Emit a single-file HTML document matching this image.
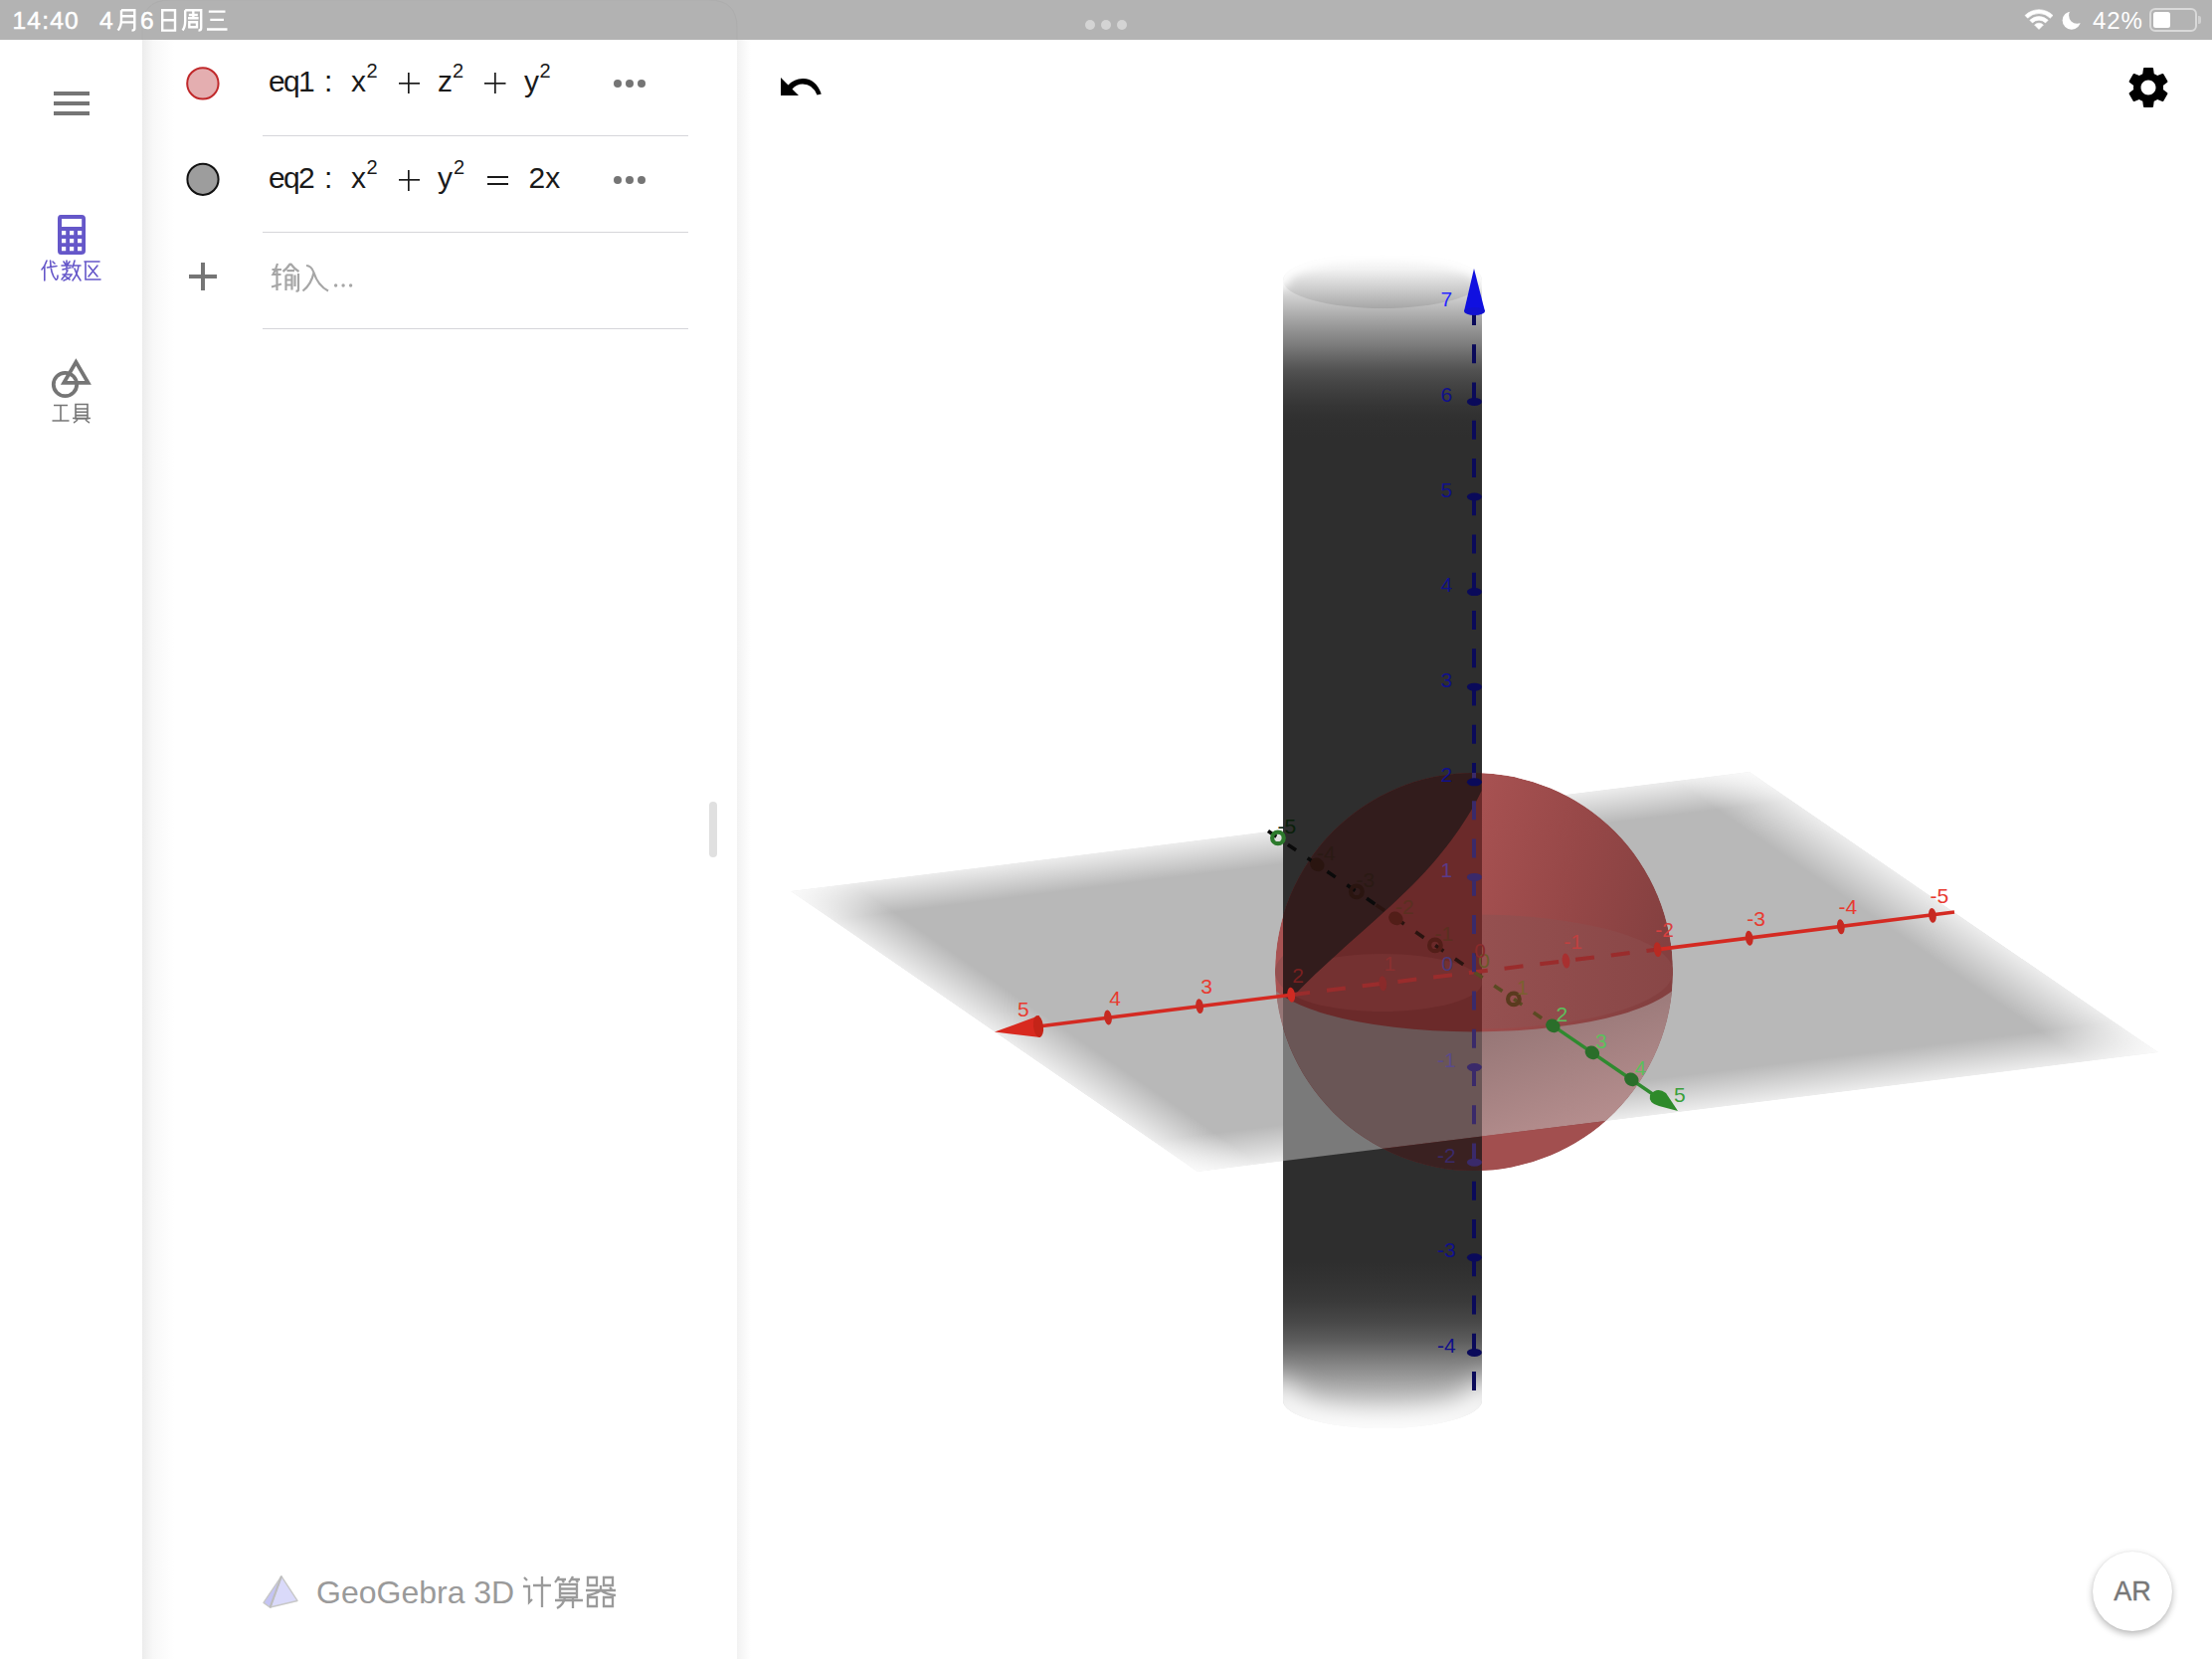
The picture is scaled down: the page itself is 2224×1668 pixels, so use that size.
<!DOCTYPE html>
<html><head><meta charset="utf-8">
<style>
html,body{margin:0;padding:0;width:2224px;height:1668px;overflow:hidden;background:#fff;font-family:"Liberation Sans",sans-serif;}
.abs{position:absolute;}
#status{position:absolute;left:0;top:0;width:2224px;height:40px;background:#b3b3b3;color:#fff;}
#side{position:absolute;left:0;top:40px;width:143px;height:1628px;background:#fff;}
#panel{position:absolute;left:143px;top:40px;width:598px;height:1628px;background:#fff;}
#panelshadowL{position:absolute;left:143px;top:40px;width:32px;height:1628px;background:linear-gradient(to right,#ececec,#f8f8f8 35%,rgba(255,255,255,0));}
#gvshadow{position:absolute;left:741px;top:40px;width:14px;height:1628px;background:linear-gradient(to right,#f2f2f2,rgba(255,255,255,0));}
.eq{position:absolute;font-size:30px;color:#1a1a1a;line-height:30px;white-space:pre;}
.sup{position:absolute;font-size:20px;color:#1a1a1a;line-height:20px;}
.div{position:absolute;left:264px;width:428px;height:1.5px;background:#d6d6da;}
.plus{position:absolute;width:21.5px;height:21px;background:linear-gradient(#1a1a1a,#1a1a1a) center/21.5px 1.7px no-repeat,linear-gradient(#1a1a1a,#1a1a1a) center/1.7px 21px no-repeat;}
.dot3{position:absolute;width:8px;height:8px;border-radius:50%;background:#757575;}
</style></head><body>

<svg class="abs" style="left:0;top:0" width="2224" height="1668" viewBox="0 0 2224 1668" id="scene"><defs>
<filter id="ubl14" filterUnits="userSpaceOnUse" x="0" y="0" width="2224" height="1668"><feGaussianBlur stdDeviation="14"/></filter>
<filter id="ubl5" filterUnits="userSpaceOnUse" x="0" y="0" width="2224" height="1668"><feGaussianBlur stdDeviation="5"/></filter>
<clipPath id="cpPlane"><polygon points="795.0,896.0 1759.0,776.0 2170.0,1058.0 1204.0,1178.0"/></clipPath>
<filter id="blur18" x="-20%" y="-20%" width="140%" height="140%"><feGaussianBlur stdDeviation="18"/></filter>
<filter id="blur14" x="-20%" y="-20%" width="140%" height="140%"><feGaussianBlur stdDeviation="14"/></filter>
<filter id="blur12" x="-20%" y="-20%" width="140%" height="140%"><feGaussianBlur stdDeviation="12"/></filter>
<filter id="blur16" x="-20%" y="-20%" width="140%" height="140%"><feGaussianBlur stdDeviation="16"/></filter>
<filter id="blur6" x="-20%" y="-20%" width="140%" height="140%"><feGaussianBlur stdDeviation="6"/></filter>
<filter id="blur3"><feGaussianBlur stdDeviation="3"/></filter>
<clipPath id="cpCyl"><rect x="1290" y="200" width="200" height="1300"/></clipPath>
<clipPath id="cpSph"><circle cx="1482" cy="977" r="200"/></clipPath>
<clipPath id="cpSphOut"><rect x="1000" y="700" width="290" height="600"/><rect x="1490" y="700" width="400" height="600"/></clipPath>
<clipPath id="cpEll"><ellipse cx="1482" cy="977" rx="200" ry="57.5"/></clipPath>
<clipPath id="cpBelowEq"><path d="M1272,977 A200,57.5 0 0,0 1692,977 L1800,1104.0 L1200,1178.5 Z"/></clipPath>
<clipPath id="cpBelowPlane"><path d="M1200,1178.5 L1800,1104.0 V1300 H1200 Z"/></clipPath>
<linearGradient id="gCyl" x1="0" y1="0" x2="0" y2="1" gradientUnits="objectBoundingBox">
<stop offset="0.0000" stop-color="#eeeeee"/>
<stop offset="0.0260" stop-color="#b5b5b5"/>
<stop offset="0.0364" stop-color="#a0a0a0"/>
<stop offset="0.0468" stop-color="#8c8c8c"/>
<stop offset="0.0572" stop-color="#7a7a7a"/>
<stop offset="0.0676" stop-color="#656565"/>
<stop offset="0.0780" stop-color="#525252"/>
<stop offset="0.0884" stop-color="#464646"/>
<stop offset="0.0988" stop-color="#3d3d3d"/>
<stop offset="0.1092" stop-color="#353535"/>
<stop offset="0.1205" stop-color="#303030"/>
<stop offset="0.1369" stop-color="#2e2e2e"/>
<stop offset="0.8553" stop-color="#2e2e2e"/>
<stop offset="0.8726" stop-color="#333333"/>
<stop offset="0.8899" stop-color="#3a3a3a"/>
<stop offset="0.9073" stop-color="#484848"/>
<stop offset="0.9246" stop-color="#5e5e5e"/>
<stop offset="0.9419" stop-color="#808080"/>
<stop offset="0.9593" stop-color="#a2a2a2"/>
<stop offset="0.9757" stop-color="#c0c0c0"/>
<stop offset="1.0000" stop-color="#f0f0f0"/>
</linearGradient>
<linearGradient id="gCap" x1="0" y1="0" x2="0" y2="1"><stop offset="0" stop-color="#ffffff"/><stop offset="0.3" stop-color="#f2f2f2"/><stop offset="0.65" stop-color="#cdcdcd"/><stop offset="1" stop-color="#a6a6a6"/></linearGradient>
<linearGradient id="gSph" x1="1470" y1="840" x2="1690" y2="900" gradientUnits="userSpaceOnUse"><stop offset="0" stop-color="#a85252"/><stop offset="0.5" stop-color="#974848"/><stop offset="1" stop-color="#844040"/></linearGradient>
<linearGradient id="gR3" x1="1490" y1="1035" x2="1530" y2="1150" gradientUnits="userSpaceOnUse"><stop offset="0" stop-color="#967676"/><stop offset="1" stop-color="#b48d8d"/></linearGradient>
<linearGradient id="gR2" x1="1490" y1="0" x2="1690" y2="0" gradientUnits="userSpaceOnUse"><stop offset="0" stop-color="#955050"/><stop offset="1" stop-color="#884646"/></linearGradient>
</defs>
<g clip-path="url(#cpPlane)">
<polygon points="795.0,896.0 1759.0,776.0 2170.0,1058.0 1204.0,1178.0" fill="#b8b8b8"/>
<linearGradient id="pe0" gradientUnits="userSpaceOnUse" x1="1277.0" y1="836.0" x2="1281.2" y2="869.7"><stop offset="0" stop-color="#fff" stop-opacity="0.74"/><stop offset="1" stop-color="#fff" stop-opacity="0"/></linearGradient>
<polygon points="601.6,915.0 1951.2,747.0 1956.2,787.7 606.6,955.7" fill="url(#pe0)"/>
<linearGradient id="pe1" gradientUnits="userSpaceOnUse" x1="1964.5" y1="917.0" x2="1936.2" y2="958.2"><stop offset="0" stop-color="#fff" stop-opacity="0.74"/><stop offset="1" stop-color="#fff" stop-opacity="0"/></linearGradient>
<polygon points="1679.6,715.5 2255.0,1110.3 2222.8,1157.3 1647.4,762.5" fill="url(#pe1)"/>
<linearGradient id="pe2" gradientUnits="userSpaceOnUse" x1="1687.0" y1="1118.0" x2="1682.6" y2="1082.3"><stop offset="0" stop-color="#fff" stop-opacity="0.74"/><stop offset="1" stop-color="#fff" stop-opacity="0"/></linearGradient>
<polygon points="2363.8,1039.0 1011.4,1207.0 1006.1,1164.3 2358.5,996.3" fill="url(#pe2)"/>
<linearGradient id="pe3" gradientUnits="userSpaceOnUse" x1="999.5" y1="1037.0" x2="1023.3" y2="1002.4"><stop offset="0" stop-color="#fff" stop-opacity="0.74"/><stop offset="1" stop-color="#fff" stop-opacity="0"/></linearGradient>
<polygon points="1283.0,1238.5 710.4,843.7 738.2,803.4 1310.8,1198.2" fill="url(#pe3)"/>
</g>
<path d="M1290,282 V1408 A100,28 0 0,0 1490,1408 V282 Z" fill="url(#gCyl)"/>
<ellipse cx="1390.0" cy="282" rx="100" ry="28" fill="url(#gCap)"/>
<clipPath id="cpCylFull"><path d="M1290,282 A100,28 0 0,1 1490,282 V1408 A100,28 0 0,1 1290,1408 Z"/></clipPath>
<g clip-path="url(#cpCylFull)">
<path d="M1270,1398 L1290,1408 A100,28 0 0,0 1490,1408 L1510,1398" fill="none" stroke="#ffffff" stroke-width="30" filter="url(#ubl14)"/>
<path d="M1270,292 L1290,282 A100,28 0 0,1 1490,282 L1510,292" fill="none" stroke="#ffffff" stroke-width="12" filter="url(#ubl5)"/>
</g>
<path d="M1290,988 A100,29 0 0,0 1490,988 V1142.5 L1290,1167.3 Z" fill="#7a7a7a"/>
<g clip-path="url(#cpSphOut)"><g clip-path="url(#cpSph)">
<circle cx="1482" cy="977" r="200" fill="url(#gSph)"/>
<ellipse cx="1482" cy="977" rx="200" ry="57.5" fill="url(#gR2)"/>
<rect x="1200" y="900" width="600" height="300" fill="url(#gR3)" clip-path="url(#cpBelowEq)"/>
<rect x="1200" y="1000" width="600" height="300" fill="#a24f4f" clip-path="url(#cpBelowPlane)"/>
</g></g>
<g clip-path="url(#cpCyl)"><g clip-path="url(#cpSph)">
<rect x="1290" y="770" width="200" height="420" fill="#6b2a2a"/>
<ellipse cx="1390" cy="988" rx="100" ry="29" fill="#743131"/>
<path d="M1301.5,1000.4 C1335,965 1385,925 1420,890 S1478,820 1489.6,795 L1490,760 L1280,760 L1280,1000 Z" fill="#321c1c"/>
<rect x="1200" y="900" width="600" height="300" fill="#6a5656" clip-path="url(#cpBelowEq)"/>
<rect x="1200" y="1000" width="600" height="300" fill="#3a2121" clip-path="url(#cpBelowPlane)"/>
</g></g>
<line x1="1040.0" y1="1032.5" x2="1298.2" y2="1000.2" stroke="#d42a22" stroke-width="3.6" stroke-linecap="butt"/>
<line x1="1666.6" y1="954.6" x2="1965.0" y2="917.0" stroke="#d42a22" stroke-width="3.6" stroke-linecap="butt"/>
<line x1="1298.2" y1="1000.2" x2="1666.6" y2="954.6" stroke="#9a2c2c" stroke-width="4" stroke-dasharray="19 17" stroke-linecap="butt"/>
<polygon points="1000,1037.5 1045,1021 1046,1043" fill="#d8291f"/>
<ellipse cx="1044" cy="1032" rx="5" ry="11" fill="#c42418" transform="rotate(-7 1044 1032)"/>
<ellipse cx="1114.0" cy="1023.0" rx="3.8" ry="7.5" fill="#c62a22" transform="rotate(-7 1114.0 1023.0)"/>
<ellipse cx="1206.1" cy="1011.6" rx="3.8" ry="7.5" fill="#c62a22" transform="rotate(-7 1206.1 1011.6)"/>
<ellipse cx="1758.7" cy="943.2" rx="3.8" ry="7.5" fill="#c62a22" transform="rotate(-7 1758.7 943.2)"/>
<ellipse cx="1850.8" cy="931.8" rx="3.8" ry="7.5" fill="#c62a22" transform="rotate(-7 1850.8 931.8)"/>
<ellipse cx="1942.9" cy="920.4" rx="3.8" ry="7.5" fill="#c62a22" transform="rotate(-7 1942.9 920.4)"/>
<ellipse cx="1298.2" cy="1000.2" rx="3.8" ry="7.5" fill="#d02a22" transform="rotate(-7 1298.2 1000.2)"/>
<ellipse cx="1390.3" cy="988.8" rx="3.8" ry="7.5" fill="#8a2a2a" transform="rotate(-7 1390.3 988.8)"/>
<ellipse cx="1574.5" cy="966.0" rx="3.8" ry="7.5" fill="#a83030" transform="rotate(-7 1574.5 966.0)"/>
<ellipse cx="1666.6" cy="954.6" rx="3.8" ry="7.5" fill="#b82a22" transform="rotate(-7 1666.6 954.6)"/>
<text x="1028.9" y="1021.9" font-size="21" fill="#e83a30" text-anchor="middle">5</text>
<text x="1121.0" y="1010.5" font-size="21" fill="#e83a30" text-anchor="middle">4</text>
<text x="1213.1" y="999.1" font-size="21" fill="#e83a30" text-anchor="middle">3</text>
<text x="1765.7" y="930.7" font-size="21" fill="#e83a30" text-anchor="middle">-3</text>
<text x="1857.8" y="919.3" font-size="21" fill="#e83a30" text-anchor="middle">-4</text>
<text x="1949.9" y="907.9" font-size="21" fill="#e83a30" text-anchor="middle">-5</text>
<text x="1673.6" y="942.1" font-size="21" fill="#d84040" text-anchor="middle">-2</text>
<text x="1581.5" y="953.5" font-size="21" fill="#c04040" text-anchor="middle">-1</text>
<text x="1305.2" y="987.7" font-size="21" fill="#7a2020" text-anchor="middle">2</text>
<text x="1397.3" y="976.3" font-size="21" fill="#8a3030" text-anchor="middle">1</text>
<line x1="1275.0" y1="835.6" x2="1383.7" y2="909.9" stroke="#0a0a0a" stroke-width="3.6" stroke-dasharray="10 14" stroke-linecap="butt"/>
<line x1="1383.7" y1="909.9" x2="1482.4" y2="977.4" stroke="#2a1410" stroke-width="3.6" stroke-dasharray="10 14" stroke-linecap="butt"/>
<line x1="1482.4" y1="977.4" x2="1561.4" y2="1031.4" stroke="#5a4a22" stroke-width="3.6" stroke-dasharray="10 14" stroke-linecap="butt"/>
<line x1="1561.4" y1="1031.4" x2="1666.0" y2="1103.0" stroke="#2f8a2f" stroke-width="3.4" stroke-linecap="butt"/>
<path d="M1659,1101 Q1666,1092 1675,1099 L1687,1117 L1668,1112 Q1657,1109 1659,1101 Z" fill="#2e8a2a"/>
<ellipse cx="1561.4" cy="1031.4" rx="7.5" ry="6.5" fill="#2a6e2a" transform="rotate(34 1561.4 1031.4)"/>
<ellipse cx="1600.9" cy="1058.4" rx="7.5" ry="6.5" fill="#2a6e2a" transform="rotate(34 1600.9 1058.4)"/>
<ellipse cx="1640.4" cy="1085.4" rx="7.5" ry="6.5" fill="#2a6e2a" transform="rotate(34 1640.4 1085.4)"/>
<circle cx="1284.9" cy="842.4" r="5.8" fill="none" stroke="#2c7a2c" stroke-width="4.2"/>
<ellipse cx="1324.4" cy="869.4" rx="7.5" ry="6.5" fill="#2a1510" transform="rotate(34 1324.4 869.4)"/>
<circle cx="1363.9" cy="896.4" r="5.8" fill="none" stroke="#2a1510" stroke-width="4.2"/>
<ellipse cx="1403.4" cy="923.4" rx="7.5" ry="6.5" fill="#521e18" transform="rotate(34 1403.4 923.4)"/>
<circle cx="1442.9" cy="950.4" r="5.8" fill="none" stroke="#521e18" stroke-width="4.2"/>
<circle cx="1521.9" cy="1004.4" r="5.8" fill="none" stroke="#5a3a1e" stroke-width="4.2"/>
<text x="1570.4" y="1026.9" font-size="21" fill="#5cc05c" text-anchor="middle">2</text>
<text x="1609.9" y="1053.9" font-size="21" fill="#5cc05c" text-anchor="middle">3</text>
<text x="1649.4" y="1080.9" font-size="21" fill="#5cc05c" text-anchor="middle">4</text>
<text x="1688.9" y="1107.9" font-size="21" fill="#3aa03a" text-anchor="middle">5</text>
<text x="1293.9" y="837.9" font-size="21" fill="#0a200a" text-anchor="middle">-5</text>
<text x="1333.4" y="864.9" font-size="21" fill="#2a1a14" text-anchor="middle">-4</text>
<text x="1372.9" y="891.9" font-size="21" fill="#2a1a14" text-anchor="middle">-3</text>
<text x="1412.4" y="918.9" font-size="21" fill="#5a3020" text-anchor="middle">-2</text>
<text x="1451.9" y="945.9" font-size="21" fill="#5a3020" text-anchor="middle">-1</text>
<text x="1530.9" y="999.9" font-size="21" fill="#7a6030" text-anchor="middle">1</text>
<g stroke-dasharray="19 19.25" stroke-width="4">
<line x1="1482" y1="314" x2="1482" y2="777" stroke="#0a0a5a" stroke-dashoffset="6"/>
<line x1="1482" y1="777" x2="1482" y2="1177" stroke="#3a2a6a" stroke-dashoffset="10"/>
<line x1="1482" y1="1177" x2="1482" y2="1398" stroke="#0a0a5a" stroke-dashoffset="27.5"/>
</g>
<polygon points="1482,270 1472,313 1493,313" fill="#1010e0"/>
<ellipse cx="1482.5" cy="313" rx="10.5" ry="4" fill="#1212d0"/>
<ellipse cx="1482.4" cy="403.9" rx="7.5" ry="4" fill="#0a0a5a"/>
<ellipse cx="1482.4" cy="499.5" rx="7.5" ry="4" fill="#0a0a5a"/>
<ellipse cx="1482.4" cy="595.1" rx="7.5" ry="4" fill="#0a0a5a"/>
<ellipse cx="1482.4" cy="690.7" rx="7.5" ry="4" fill="#0a0a5a"/>
<ellipse cx="1482.4" cy="786.3" rx="7.5" ry="4" fill="#0a0a5a"/>
<ellipse cx="1482.4" cy="1264.3" rx="7.5" ry="4" fill="#0a0a5a"/>
<ellipse cx="1482.4" cy="1359.9" rx="7.5" ry="4" fill="#0a0a5a"/>
<ellipse cx="1482.4" cy="881.9" rx="7.5" ry="4" fill="#3a2a6a"/>
<ellipse cx="1482.4" cy="1073.1" rx="7.5" ry="4" fill="#3a2a6a"/>
<ellipse cx="1482.4" cy="1168.7" rx="7.5" ry="4" fill="#3a2a6a"/>
<text x="1454.4" y="308.3" font-size="21" fill="#2a2aff" text-anchor="middle">7</text>
<text x="1454.4" y="403.9" font-size="21" fill="#10108a" text-anchor="middle">6</text>
<text x="1454.4" y="499.5" font-size="21" fill="#10108a" text-anchor="middle">5</text>
<text x="1454.4" y="595.1" font-size="21" fill="#10108a" text-anchor="middle">4</text>
<text x="1454.4" y="690.7" font-size="21" fill="#10108a" text-anchor="middle">3</text>
<text x="1454.4" y="786.3" font-size="21" fill="#10108a" text-anchor="middle">2</text>
<text x="1454.4" y="881.9" font-size="21" fill="#5a3a8a" text-anchor="middle">1</text>
<text x="1454.4" y="1073.1" font-size="21" fill="#5a4a8a" text-anchor="middle">-1</text>
<text x="1454.4" y="1168.7" font-size="21" fill="#3a2a6a" text-anchor="middle">-2</text>
<text x="1454.4" y="1264.3" font-size="21" fill="#10108a" text-anchor="middle">-3</text>
<text x="1454.4" y="1359.9" font-size="21" fill="#10108a" text-anchor="middle">-4</text>
<text x="1455.0" y="975.5" font-size="21" fill="#4a3a7a" text-anchor="middle">0</text>
<text x="1492.0" y="972.5" font-size="21" fill="#6a5a2a" text-anchor="middle">0</text>
<text x="1488.0" y="962.5" font-size="21" fill="#8a2a2a" text-anchor="middle">0</text></svg>

<div id="side"></div>
<div id="panel"></div>
<div id="panelshadowL"></div>
<div id="gvshadow"></div>

<!-- status bar -->
<div id="status">
  <svg class="abs" style="left:0;top:0" width="2224" height="40">
    <path d="M143,40 V28 Q143,0 171,0 H713 Q741,0 741,28 V40" fill="#b2b2b2" stroke="#adadad" stroke-width="1"/>
  </svg>
  <div class="abs" style="left:12.5px;top:6.5px;font-size:24.5px;letter-spacing:1.2px;-webkit-text-stroke:0.5px #fff;">14:40</div>
  <svg class="abs" style="left:98px;top:4px" width="140" height="32" viewBox="0 0 140 32" fill="none" stroke="#fff" stroke-width="2.4">
    <text x="2" y="24.5" font-size="24.5" fill="#fff" stroke="#fff" stroke-width="0.5" font-family="Liberation Sans">4</text>
    <path d="M24,6.2 H37.3 V24.8 Q37.3,26.6 34.5,26.6 M24,6.2 V16 Q24,22.5 20.6,26.6 M24,12.2 H37.3 M24,18.4 H37.3"/>
    <text x="43" y="24.5" font-size="24.5" fill="#fff" stroke="#fff" stroke-width="0.5" font-family="Liberation Sans">6</text>
    <path d="M65.2,6.2 H78 V26.6 H65.2 Z M65.2,16.2 H78"/>
    <path d="M88.2,6.2 H104.2 V24.3 Q104.2,26.6 101.5,26.6 M88.2,6.2 V17 Q88.2,23.2 85.6,26.6 M91.8,11 H100.8 M96.3,7.6 V14.3 M91,14.3 H101.6 M92.3,18.2 H100 V23.3 H92.3 Z"/>
    <path d="M111.8,7.6 H128.5 M113.3,15.9 H127 M110,25.5 H130.5"/>
  </svg>
  <!-- center dots -->
  <div class="abs" style="left:1091px;top:20px;width:10px;height:10px;border-radius:50%;background:#d4d4d4"></div>
  <div class="abs" style="left:1107px;top:20px;width:10px;height:10px;border-radius:50%;background:#d4d4d4"></div>
  <div class="abs" style="left:1123px;top:20px;width:10px;height:10px;border-radius:50%;background:#d4d4d4"></div>
  <!-- wifi -->
  <svg class="abs" style="left:2034px;top:8px" width="32" height="24" viewBox="0 0 32 24">
    <path d="M2.00,7.50 A19.8,19.8 0 0 1 30.00,7.50 L27.31,10.19 A16.0,16.0 0 0 0 4.69,10.19 Z M6.81,12.31 A13.0,13.0 0 0 1 25.19,12.31 L22.58,14.92 A9.3,9.3 0 0 0 9.42,14.92 Z M16,21.5 L11.55,17.05 A6.3,6.3 0 0 1 20.45,17.05 Z" fill="#fff" stroke="#fff" stroke-width="0.6" stroke-linejoin="round"/>
  </svg>
  <!-- moon -->
  <svg class="abs" style="left:2072px;top:10px" width="22" height="22" viewBox="0 0 22 22">
    <defs><mask id="mm"><rect width="22" height="22" fill="#fff"/><circle cx="16.3" cy="5.6" r="8.2" fill="#000"/></mask></defs>
    <circle cx="10.8" cy="10.6" r="9.2" fill="#fff" mask="url(#mm)"/>
  </svg>
  <div class="abs" style="left:2104px;top:6.5px;font-size:24px;letter-spacing:0.9px;">42%</div>
  <!-- battery -->
  <div class="abs" style="left:2161px;top:8px;width:44px;height:20px;border:2px solid #d9d9d9;border-radius:6px;"></div>
  <div class="abs" style="left:2164.5px;top:12px;width:17.5px;height:16px;background:#fff;border-radius:2.5px;"></div>
  <div class="abs" style="left:2210px;top:16px;width:3px;height:8px;background:#d0d0d0;border-radius:0 2px 2px 0;"></div>
</div>

<!-- side bar -->
<div class="abs" style="left:54px;top:92.2px;width:36px;height:3.7px;background:#757575"></div>
<div class="abs" style="left:54px;top:102.2px;width:36px;height:3.7px;background:#757575"></div>
<div class="abs" style="left:54px;top:112.1px;width:36px;height:3.7px;background:#757575"></div>

<svg class="abs" style="left:57px;top:215px" width="30" height="42" viewBox="0 0 30 42">
  <path fill="#6557c9" fill-rule="evenodd" d="M4,1 H25 Q29,1 29,5 V37 Q29,41 25,41 H4 Q1,41 1,37 V5 Q1,1 4,1 Z
   M5,5 H25.2 V13.1 H5 Z
   M5,17 H9.2 V21.2 H5 Z M13,17 H17.2 V21.2 H13 Z M21,17 H25.2 V21.2 H21 Z
   M5,25 H9.2 V29.2 H5 Z M13,25 H17.2 V29.2 H13 Z M21,25 H25.2 V29.2 H21 Z
   M5,33 H9.2 V37.2 H5 Z M13,33 H17.2 V37.2 H13 Z M21,33 H25.2 V37.2 H21 Z"/>
</svg>
<!-- 代数区 -->
<svg class="abs" style="left:40px;top:260px" width="64" height="24" viewBox="0 0 64 24" fill="none" stroke="#6557c9" stroke-width="1.6" stroke-linecap="round">
  <path d="M7,2 Q5,8 2,11 M4.8,7 V22 M7.5,9 L17,7.5 M10.6,2 Q11,16 16,21 Q18,22 18,17 M13,3 L15,5"/>
  <path d="M24,3 L26,6 M30,3 L28,6 M22,7 H32 M27,2 V12 M23,11 L31,9 M28,12 Q26,16 22,21 M23,16 H32 Q30,20 24,22 M26,18 L30,21 M35,2 Q34,6 33,9 M34,7 H41 M39,7 Q38,16 33,22 M35,10 Q37,17 41,22"/>
  <path d="M45,3 H60 M46,3 V21 H61 M49,7 L58,18 M58,7 L49,18"/>
</svg>

<svg class="abs" style="left:48px;top:358px" width="48" height="44" viewBox="0 0 48 44" fill="none" stroke="#757575" stroke-width="3.8">
  <circle cx="17.5" cy="28.5" r="11.7"/>
  <path d="M28.4,6 L16.2,26.9 H40.6 Z" stroke-linejoin="miter"/>
</svg>
<!-- 工具 -->
<svg class="abs" style="left:50px;top:404px" width="44" height="24" viewBox="0 0 44 24" fill="none" stroke="#757575" stroke-width="1.6">
  <path d="M4,3.5 H18 M11,3.5 V18.5 M2.5,19 H19.5"/>
  <path d="M26,2.5 H38 V17 H26 Z M26,7 H38 M26,10.3 H38 M26,13.6 H38 M23,16.5 H41 M28,18 Q26,20 24,21 M36,18 Q38,20 40,21"/>
</svg>

<!-- algebra rows -->
<svg class="abs" style="left:180px;top:60px" width="50" height="50"><circle cx="23.9" cy="23.9" r="15.7" fill="#e4aeb0" stroke="#c0282a" stroke-width="2"/></svg>
<svg class="abs" style="left:180px;top:157px" width="50" height="50"><circle cx="24" cy="23.3" r="15.6" fill="#9d9d9d" stroke="#111" stroke-width="2"/></svg>

<div class="eq" style="left:270px;top:67px;letter-spacing:-1.7px">eq1</div>
<div class="eq" style="left:326px;top:67px">:</div>
<div class="eq" style="left:353px;top:67px">x</div>
<div class="sup" style="left:368.5px;top:61px">2</div>
<div class="plus" style="left:400.5px;top:73.4px"></div>
<div class="eq" style="left:440px;top:67px">z</div>
<div class="sup" style="left:455px;top:61px">2</div>
<div class="plus" style="left:487px;top:73.4px"></div>
<div class="eq" style="left:527px;top:67px">y</div>
<div class="sup" style="left:542.5px;top:61px">2</div>
<div class="dot3" style="left:617px;top:80px"></div>
<div class="dot3" style="left:629px;top:80px"></div>
<div class="dot3" style="left:641px;top:80px"></div>
<div class="div" style="top:135.5px"></div>

<div class="eq" style="left:270px;top:164px;letter-spacing:-1.7px">eq2</div>
<div class="eq" style="left:326px;top:164px">:</div>
<div class="eq" style="left:353px;top:164px">x</div>
<div class="sup" style="left:368.5px;top:158px">2</div>
<div class="plus" style="left:400.5px;top:170.6px"></div>
<div class="eq" style="left:440px;top:164px">y</div>
<div class="sup" style="left:456px;top:158px">2</div>
<div class="abs" style="left:489.6px;top:176.6px;width:21.8px;height:2px;background:#1a1a1a"></div>
<div class="abs" style="left:489.6px;top:183.6px;width:21.8px;height:2px;background:#1a1a1a"></div>
<div class="eq" style="left:531.5px;top:164px">2x</div>
<div class="dot3" style="left:617px;top:177px"></div>
<div class="dot3" style="left:629px;top:177px"></div>
<div class="dot3" style="left:641px;top:177px"></div>
<div class="div" style="top:232.5px"></div>

<!-- input row -->
<div class="abs" style="left:190px;top:275.5px;width:28px;height:4px;background:#757575"></div>
<div class="abs" style="left:202px;top:264px;width:4px;height:28px;background:#757575"></div>
<svg class="abs" style="left:270px;top:262px" width="90" height="34" viewBox="0 0 90 34" fill="none" stroke="#a6a6a6" stroke-width="2.2">
  <path d="M9,3 Q7,10 4.5,14 H12.5 M3.5,9 H13 M8.5,10 V30 M3,26.5 L13,23.5"/>
  <path d="M22,3 Q18,8.5 14.5,11 M22,3 Q26,8.5 30.5,11 M18.5,10.2 H26 M17.5,14.5 V30 M17.5,14.5 H23.5 V29.5 M17.5,19.5 H23.5 M17.5,24.5 H23.5 M26.5,14.5 V26 M30,13 V29.5 Q30,31 27.5,30.5"/>
  <path d="M38,5 Q43,5 45.5,12 Q49.5,25 60,30.5 M45.5,12 Q43,24 34.5,30.5"/>
  <circle cx="67.6" cy="25" r="1.7" fill="#a6a6a6" stroke="none"/>
  <circle cx="75.1" cy="25" r="1.7" fill="#a6a6a6" stroke="none"/>
  <circle cx="82.6" cy="25" r="1.7" fill="#a6a6a6" stroke="none"/>
</svg>
<div class="div" style="top:329.5px"></div>

<!-- handle -->
<div class="abs" style="left:713px;top:806px;width:8px;height:56px;border-radius:4px;background:#e0e0e0"></div>

<!-- footer -->
<svg class="abs" style="left:263px;top:1583px" width="38" height="34" viewBox="0 0 40 36">
  <path d="M21,2 L2,30 L9,35 Z" fill="#c4c4f4" stroke="#c8c8c8" stroke-width="1.5" stroke-linejoin="round"/>
  <path d="M21,2 L38,28 L9,35 Z" fill="#dadafa" stroke="#c8c8c8" stroke-width="1.5" stroke-linejoin="round"/>
  <path d="M21,2 L9,35" stroke="#bdbdbd" stroke-width="2.2"/>
</svg>
<div class="abs" style="left:318px;top:1582.5px;font-size:32px;color:#9a9a9a;line-height:36px;">GeoGebra 3D</div>
<svg class="abs" style="left:524px;top:1583px" width="100" height="36" viewBox="0 0 100 36" fill="none" stroke="#9a9a9a" stroke-width="2.3">
  <path d="M3,3 L6,6 M2,12 H8 V28 L11,25 M12,11 H30 M21,2 V33"/>
  <path d="M38,2 Q36,6 34,8 M36,5 H45 M41,5 L43,8 M52,2 Q50,6 48,8 M50,5 H59 M55,5 L57,8 M39,10 H56 V23 H39 Z M39,14.5 H56 M39,19 H56 M34,26 H62 M44,23 Q43,30 36,34 M52,23 V34"/>
  <path d="M67,3 H76 V11 H67 Z M83,3 H92 V11 H83 Z M65,16 H95 M80,11 V16 Q74,20 66,21 M80,16 Q86,20 95,21 M89,13 L91,15 M67,23 H76 V32 H67 Z M83,23 H92 V32 H83 Z"/>
</svg>

<!-- graphics view icons -->
<svg class="abs" style="left:782px;top:74px" width="46" height="26" viewBox="0 0 46 26">
  <path d="M3,4 L3,22 L21,22 L14.5,15.5 Q19,10.5 25,10.5 Q35,10.5 39.5,21.5 L43.8,20.5 Q38,4.5 25,5 Q16.5,5.2 10.5,11.5 Z" fill="#000"/>
</svg>
<svg class="abs" style="left:2135px;top:63px" width="50" height="50" viewBox="0 0 24 24">
  <path fill="#000" d="M19.14,12.94c0.04-0.3,0.06-0.61,0.06-0.94c0-0.32-0.02-0.64-0.07-0.94l2.03-1.58c0.18-0.14,0.23-0.41,0.12-0.61 l-1.92-3.32c-0.12-0.22-0.37-0.29-0.59-0.22l-2.39,0.96c-0.5-0.38-1.03-0.7-1.62-0.94L14.4,2.81c-0.04-0.24-0.24-0.41-0.48-0.41 h-3.84c-0.24,0-0.43,0.17-0.47,0.41L9.25,5.35C8.66,5.59,8.12,5.92,7.63,6.29L5.24,5.33c-0.22-0.08-0.47,0-0.59,0.22L2.74,8.87 C2.62,9.08,2.66,9.34,2.86,9.48l2.03,1.58C4.84,11.36,4.8,11.69,4.8,12s0.02,0.64,0.07,0.94l-2.03,1.58 c-0.18,0.14-0.23,0.41-0.12,0.61l1.92,3.32c0.12,0.22,0.37,0.29,0.59,0.22l2.39-0.96c0.5,0.38,1.03,0.7,1.62,0.94l0.36,2.54 c0.05,0.24,0.24,0.41,0.48,0.41h3.84c0.24,0,0.44-0.17,0.47-0.41l0.36-2.54c0.59-0.24,1.13-0.56,1.62-0.94l2.39,0.96 c0.22,0.08,0.47,0,0.59-0.22l1.92-3.32c0.12-0.22,0.07-0.47-0.12-0.61L19.14,12.94z M12,15.6c-1.98,0-3.6-1.62-3.6-3.6 s1.62-3.6,3.6-3.6s3.6,1.62,3.6,3.6S13.98,15.6,12,15.6z"/>
</svg>

<!-- AR button -->
<div class="abs" style="left:2104px;top:1560px;width:80px;height:80px;border-radius:50%;background:#fff;box-shadow:0 3px 7px rgba(0,0,0,0.28),0 0 2px rgba(0,0,0,0.08);"></div>
<div class="abs" style="left:2104px;top:1560px;width:80px;height:80px;line-height:80px;text-align:center;font-size:27px;color:#777;-webkit-text-stroke:0.4px #777;">AR</div>

</body></html>
